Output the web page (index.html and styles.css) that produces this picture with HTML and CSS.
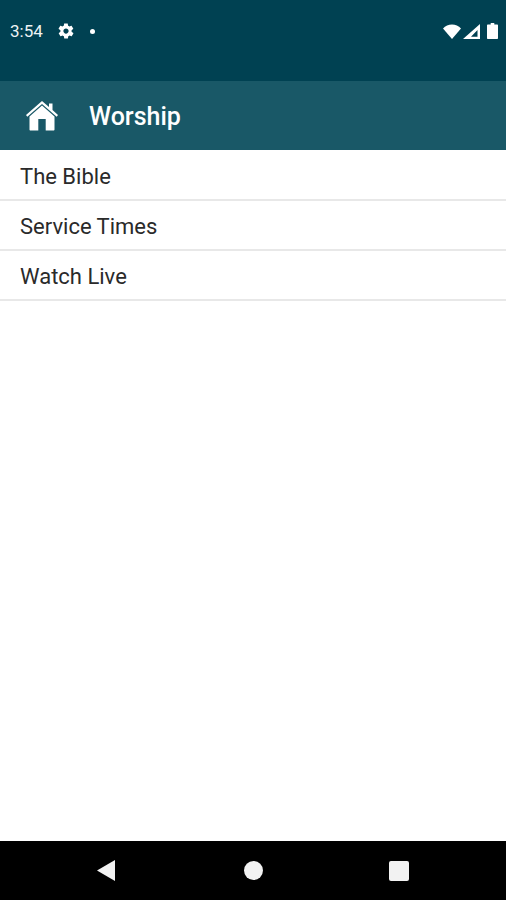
FILE: index.html
```html
<!DOCTYPE html>
<html lang="en">

<head>
    <meta charset="utf-8">
    <meta name="viewport" content="width=device-width, initial-scale=1.0">
    <title>Worship</title>
    <link rel="stylesheet" href="styles.css">
</head>

<body>
    <div class="phone">
        <section class="statusbar">
            <div class="status-left">
                <span class="clock">3:54</span>
                <svg class="gear" width="18" height="18" viewBox="0 0 24 24">
                    <path fill="#fff" d="M19.4 13c0-.3.1-.6.1-1s0-.7-.1-1l2.100-1.600c.2-.2.2-.4.1-.6l-2-3.500c-.1-.2-.4-.3-.6-.2l-2.500 1c-.5-.4-1.100-.7-1.700-1l-.4-2.600c0-.3-.2-.4-.5-.4h-4c-.3 0-.5.1-.5.4l-.4 2.600c-.6.3-1.200.6-1.700 1l-2.500-1c-.2-.1-.5 0-.6.2l-2 3.500c-.1.2-.1.4.1.6L4.600 11c0 .3-.1.7-.1 1s0 .7.1 1l-2.100 1.600c-.2.2-.2.4-.1.6l2 3.500c.1.2.4.3.6.2l2.500-1c.5.4 1.100.7 1.700 1l.4 2.600c0 .3.2.4.5.4h4c.3 0 .5-.1.5-.4l.4-2.600c.6-.3 1.200-.6 1.700-1l2.500 1c.2.1.5 0 .6-.2l2-3.500c.1-.2.1-.4-.1-.6L19.400 13zM12 15.500c-1.900 0-3.500-1.600-3.500-3.500s1.600-3.500 3.500-3.500 3.500 1.600 3.500 3.500-1.600 3.500-3.500 3.500z"/>
                </svg>
                <span class="dot"></span>
            </div>
            <div class="status-right">
                <svg class="wifi" width="18" height="15" viewBox="0 0 18 15">
                    <path fill="#fff" d="M0 4.500C2.400 2 5.500.5 9 .5s6.600 1.500 9 4L9 15z"/>
                </svg>
                <svg class="signal" width="17" height="15" viewBox="0 0 17 15">
                    <path fill="#fff" fill-rule="evenodd" d="M17 0v15H0zM14.500 6L8 12.800h6.500z"/>
                </svg>
                <svg class="battery" width="11" height="16" viewBox="0 0 11 16">
                    <path fill="#fff" d="M3.700 0h3.600v1.500H10c.6 0 1 .4 1 1V15c0 .6-.4 1-1 1H1c-.6 0-1-.4-1-1V2.500c0-.6.4-1 1-1h2.700z"/>
                </svg>
            </div>
        </section>

        <header class="appbar">
            <svg class="home" width="32" height="30" viewBox="0 0 32 30">
                <path fill="#fff" d="M16 0l7 6V2.500h3.500V9L32 14l-1.300 1.700L16 3 1.300 15.700 0 14z"/>
                <path fill="#fff" d="M16 4.500L28.500 15.500V28.500c0 .6-.4 1-1 1h-7.800V18h-7.400v11.500H4.500c-.6 0-1-.4-1-1V15.500z"/>
            </svg>
            <h1>Worship</h1>
        </header>

        <main class="list">
            <a class="list-item">The Bible</a>
            <a class="list-item">Service Times</a>
            <a class="list-item">Watch Live</a>
        </main>

        <nav class="navbar">
            <svg width="18" height="21" viewBox="0 0 18 21">
                <path fill="#f2f2f2" d="M18 0v21L0 10.500z"/>
            </svg>
            <span class="nav-circle"></span>
            <span class="nav-square"></span>
        </nav>
    </div>
</body>

</html>
```

FILE: styles.css
```css
body {
    margin: 0;
    background-color: #fff;
    font-family: Roboto, sans-serif;
}

.phone {
    display: flex;
    flex-direction: column;
    height: 900px;
}

.statusbar {
    height: 81px;
    background-color: #004152;
    display: flex;
    justify-content: space-between;
    align-items: flex-start;
    padding: 22px 8px 0 10px;
    box-sizing: border-box;
}

.status-left {
    display: flex;
    align-items: center;
    height: 18px;
}

.clock {
    color: #eef3f4;
    font-size: 17px;
    width: 47px;
}

.dot {
    width: 5px;
    height: 5px;
    border-radius: 50%;
    background-color: #fff;
    margin-left: 15px;
}

.status-right {
    display: flex;
    align-items: center;
    height: 18px;
}

.signal {
    margin-left: 2px;
}

.battery {
    margin-left: 7px;
}

.appbar {
    height: 69px;
    background-color: #195867;
    display: flex;
    align-items: center;
    padding-left: 26px;
}

.appbar h1 {
    margin: 2px 0 0 31px;
    color: #fff;
    font-size: 25px;
    font-weight: 500;
}

.list {
    flex: 1;
    display: flex;
    flex-direction: column;
    padding-top: .5px;
}

.list-item {
    height: 50.200px;
    box-sizing: border-box;
    display: flex;
    align-items: center;
    padding: 3px 0 0 20px;
    color: #2a2a2a;
    font-size: 22px;
    border-bottom: 2px solid #e8e8e8;
}

.navbar {
    height: 59px;
    background-color: #000;
    display: flex;
    align-items: center;
    padding: 0 97px;
    justify-content: space-between;
}

.nav-circle {
    width: 19px;
    height: 19px;
    margin-left: 2px;
    border-radius: 50%;
    background-color: #f2f2f2;
}

.nav-square {
    width: 20px;
    height: 20px;
    border-radius: 2px;
    background-color: #f2f2f2;
}
```
